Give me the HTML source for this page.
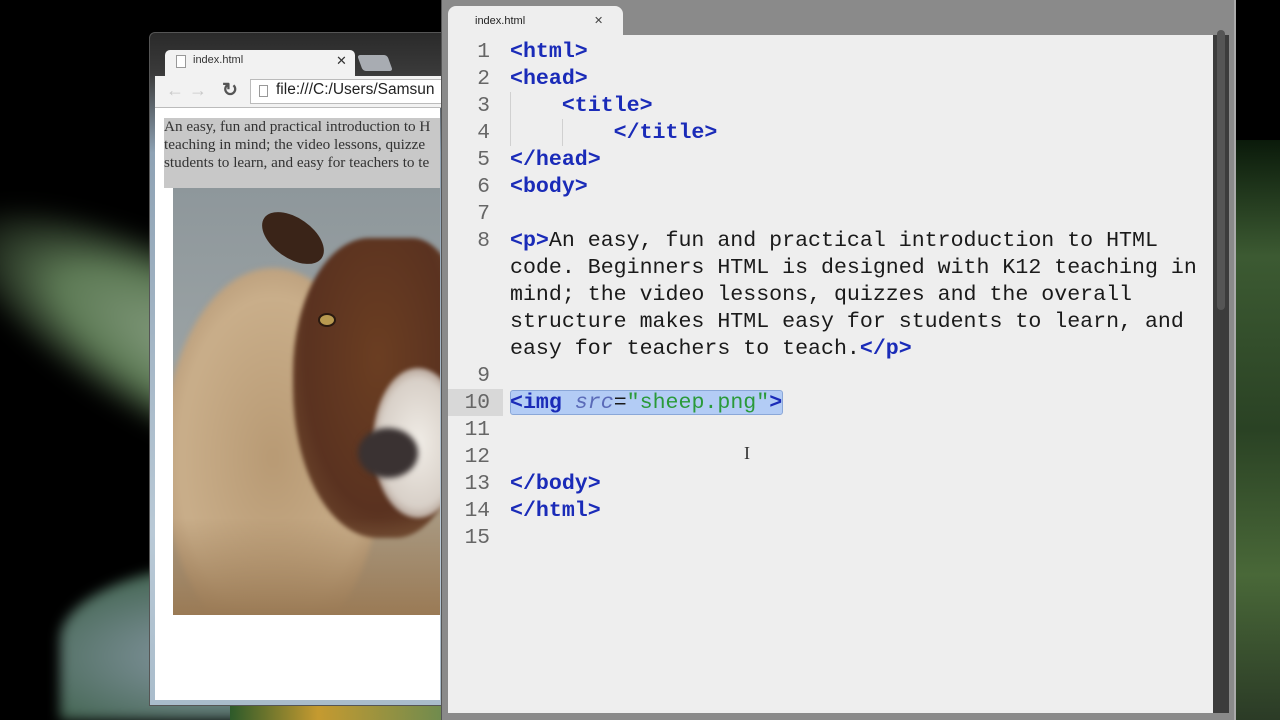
<!DOCTYPE html>
<html style="width:1280px;height:720px;overflow:hidden"><head><meta charset="utf-8"><style>
*{margin:0;padding:0;box-sizing:border-box}
body{width:1280px;height:720px;overflow:hidden;position:relative;background:#000;font-family:"Liberation Sans",sans-serif}
#w{position:absolute;left:0;top:0;width:1280px;height:720px;overflow:hidden}
.abs{position:absolute}
.code{font-family:"Liberation Mono",monospace;font-size:21.6px;line-height:27px;white-space:pre;color:#1a1a1a}
.t{color:#1a2bb8;font-weight:bold}
.n{position:absolute;left:448px;width:42px;text-align:right;color:#666;font-family:"Liberation Mono",monospace;font-size:21.2px;line-height:27px}
</style></head><body><div id="w">
<!-- desktop background -->
<div class="abs" style="left:-60px;top:280px;width:560px;height:170px;background:radial-gradient(ellipse at center,#8fa58a 0%,#5d7a55 45%,rgba(20,40,20,0) 75%);transform:rotate(28deg);filter:blur(10px)"></div>
<div class="abs" style="left:60px;top:560px;width:400px;height:160px;border-radius:50% 50% 0 0;background:radial-gradient(ellipse at 40% 60%,#8a9aa8,#4a6a5a 60%,#1d3a1d 90%);filter:blur(6px)"></div>
<div class="abs" style="left:1230px;top:140px;width:50px;height:580px;background:linear-gradient(180deg,#0a1a0a,#3c5a32 20%,#2a4224 50%,#496838 75%,#2b3b26)"></div>
<div class="abs" style="left:230px;top:700px;width:220px;height:20px;background:linear-gradient(90deg,#2d5a2a,#c59a30 40%,#6a8a50)"></div>

<!-- browser window -->
<div class="abs" style="left:149px;top:32px;width:300px;height:674px;background:linear-gradient(180deg,#2a2a2a 0,#3a3a3a 40px,#8ea2b4 120px,#b9c9d6 500px,#a9bccb);border-radius:6px 6px 0 0;border:1px solid #555"></div>
<div class="abs" style="left:165px;top:50px;width:190px;height:27px;background:#f2f2f2;border-radius:5px 5px 0 0"></div>
<div class="abs" style="left:176px;top:55px;width:10px;height:13px;border:1px solid #999;background:#fff"></div>
<div class="abs" style="left:193px;top:54px;font-size:11px;color:#333">index.html</div>
<div class="abs" style="left:336px;top:53px;font-size:13px;color:#333">✕</div>
<div class="abs" style="left:360px;top:55px;width:30px;height:16px;background:#a8acb2;transform:skewX(20deg);border-radius:3px"></div>
<div class="abs" style="left:155px;top:76px;width:290px;height:32px;background:#f2f2f2;border-bottom:1px solid #bbb"></div>
<div class="abs" style="left:166px;top:80px;font-size:18px;color:#c8c8c8">← →</div>
<div class="abs" style="left:222px;top:79px;font-size:19px;color:#555;font-weight:bold">↻</div>
<div class="abs" style="left:250px;top:79px;width:195px;height:25px;background:#fff;border:1px solid #bbb;border-right:none"></div>
<div class="abs" style="left:259px;top:85px;width:9px;height:12px;border:1px solid #999"></div>
<div class="abs" style="left:276px;top:81px;font-size:15.5px;color:#222">file:///C:/Users/Samsun</div>
<div class="abs" style="left:155px;top:108px;width:285px;height:592px;background:#fff"></div>
<div class="abs" style="left:164px;top:118px;width:276px;height:70px;background:#c8c8c8;overflow:hidden;font-family:'Liberation Serif',serif;font-size:15.2px;line-height:18px;color:#333;white-space:nowrap">An easy, fun and practical introduction to H<br>teaching in mind; the video lessons, quizze<br>students to learn, and easy for teachers to te</div>
<!-- sheep -->
<div class="abs" style="left:173px;top:188px;width:267px;height:427px;overflow:hidden;background:linear-gradient(180deg,#8e979b,#9aa2a4 40%,#a89880 60%)">
  <div class="abs" style="left:-10px;top:80px;width:220px;height:380px;border-radius:50%;background:radial-gradient(ellipse,#b89a74,#c9ae8a 60%,#a08060);filter:blur(3px)"></div>
  <div class="abs" style="left:85px;top:30px;width:70px;height:40px;border-radius:50%;background:#3a2418;transform:rotate(35deg)"></div>
  <div class="abs" style="left:120px;top:50px;width:170px;height:300px;border-radius:45% 30% 40% 50%;background:radial-gradient(ellipse at 50% 40%,#6b3e22,#5a3220 60%,#7a5535);filter:blur(2px)"></div>
  <div class="abs" style="left:200px;top:180px;width:90px;height:150px;border-radius:50%;background:radial-gradient(ellipse,#f0ece6,#d8d0c8 60%,rgba(200,190,180,0));filter:blur(2px)"></div>
  <div class="abs" style="left:185px;top:240px;width:60px;height:50px;border-radius:50%;background:#3a3232;filter:blur(3px)"></div>
  <div class="abs" style="left:145px;top:125px;width:18px;height:14px;border-radius:50%;background:#b89a50;border:2px solid #2a1a10"></div>
  <div class="abs" style="left:0;top:330px;width:267px;height:97px;background:linear-gradient(180deg,rgba(170,140,100,0),#9a7a55);"></div>
</div>

<!-- editor window -->
<div class="abs" style="left:441px;top:0;width:795px;height:720px;background:#8a8a8a;border-left:1px solid #555;border-right:2px solid #aaa"></div>
<div class="abs" style="left:448px;top:6px;width:175px;height:30px;background:#eeeeee;border-radius:8px 8px 0 0"></div>
<div class="abs" style="left:475px;top:15px;font-size:11px;color:#222">index.html</div>
<div class="abs" style="left:594px;top:14px;font-size:11px;color:#444">✕</div>
<div class="abs" style="left:448px;top:35px;width:766px;height:678px;background:#eeeeee"></div>
<div class="abs" style="left:1213px;top:35px;width:16px;height:678px;background:#3c3c3c"></div>
<div class="abs" style="left:1217px;top:30px;width:8px;height:280px;background:#555;border-radius:4px"></div>
<div class="abs" style="left:448px;top:389px;width:55px;height:27px;background:#d8d8d8"></div>
<div class="abs" style="left:510px;top:390px;width:273px;height:25px;background:#b3ccf5;border:1px solid #8aa7d8;border-radius:3px"></div>
<div class="abs" style="left:510px;top:92px;width:1px;height:54px;background:#d0d0d0"></div>
<div class="abs" style="left:562px;top:119px;width:1px;height:27px;background:#d0d0d0"></div>

<div class="n" style="top:39px">1<br>2<br>3<br>4<br>5<br>6<br>7<br>8<br><br><br><br><br>9<br>10<br>11<br>12<br>13<br>14<br>15</div>
<div class="abs code" style="left:510px;top:39px"><span class="t">&lt;html&gt;</span>
<span class="t">&lt;head&gt;</span>
    <span class="t">&lt;title&gt;</span>
        <span class="t">&lt;/title&gt;</span>
<span class="t">&lt;/head&gt;</span>
<span class="t">&lt;body&gt;</span>

<span class="t">&lt;p&gt;</span>An easy, fun and practical introduction to HTML
code. Beginners HTML is designed with K12 teaching in
mind; the video lessons, quizzes and the overall
structure makes HTML easy for students to learn, and
easy for teachers to teach.<span class="t">&lt;/p&gt;</span>

<span class="t">&lt;img</span> <i style="color:#5a6ab8">src</i>=<span style="color:#2a9a3a">"sheep.png"</span><span class="t">&gt;</span>


<span class="t">&lt;/body&gt;</span>
<span class="t">&lt;/html&gt;</span></div>
<div class="abs" style="left:744px;top:443px;font-size:18px;color:#333;font-family:'Liberation Serif',serif">I</div>
</div></body></html>
